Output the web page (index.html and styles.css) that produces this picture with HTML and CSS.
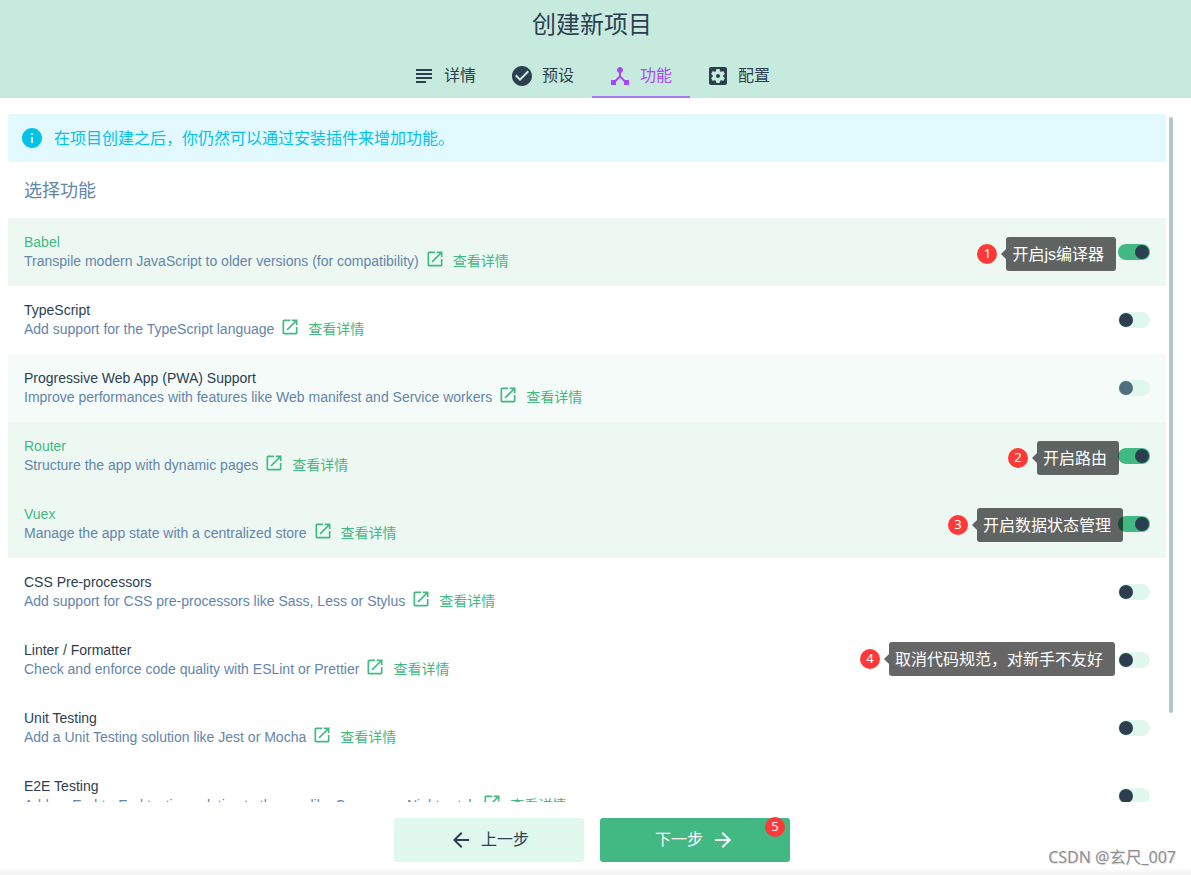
FILE: index.html
```html
<!DOCTYPE html>
<html lang="zh-CN">
<head>
<meta charset="utf-8">
<meta name="viewport" content="width=device-width, initial-scale=1">
<title>创建新项目</title>
<link rel="stylesheet" href="styles.css">
</head>
<body>
<svg class="defs" aria-hidden="true">
  <symbol id="open" viewBox="0 0 24 24"><path d="M19 19H5V5h7V3H5c-1.11 0-2 .9-2 2v14c0 1.1.89 2 2 2h14c1.1 0 2-.9 2-2v-7h-2v7zM14 3v2h3.59l-9.83 9.83 1.41 1.41L19 6.41V10h2V3h-7z"/></symbol>
</svg>
<header class="header">
  <h1 class="title">创建新项目</h1>
  <nav class="tabs">
    <button class="tab" type="button"><svg class="icon" viewBox="0 0 24 24"><path d="M14 17H4v2h10v-2zm6-8H4v2h16V9zM4 15h16v-2H4v2zM4 5v2h16V5H4z"/></svg>详情</button>
    <button class="tab" type="button"><svg class="icon" viewBox="0 0 24 24"><path d="M12 2C6.48 2 2 6.48 2 12s4.48 10 10 10 10-4.48 10-10S17.52 2 12 2zm-2 15l-5-5 1.41-1.41L10 14.17l7.59-7.59L19 8l-9 9z"/></svg>预设</button>
    <button class="tab tab-active" type="button"><svg class="icon" viewBox="0 0 24 24"><path d="M17 16l-4-4V8.82C14.16 8.4 15 7.3 15 6c0-1.66-1.34-3-3-3S9 4.34 9 6c0 1.3.84 2.4 2 2.82V12l-4 4H3v5h5v-3.05l4-4.2 4 4.2V21h5v-5h-4z"/></svg>功能</button>
    <button class="tab" type="button"><svg class="icon" viewBox="0 0 24 24"><path d="M12 10c-1.1 0-2 .9-2 2s.9 2 2 2 2-.9 2-2-.9-2-2-2zm7-7H5c-1.11 0-2 .9-2 2v14c0 1.1.89 2 2 2h14c1.11 0 2-.9 2-2V5c0-1.1-.89-2-2-2zm-1.75 9c0 .23-.02.46-.05.68l1.48 1.16c.13.11.17.3.08.45l-1.4 2.42c-.09.15-.27.21-.43.15l-1.74-.7c-.36.28-.76.51-1.18.69l-.26 1.85c-.03.17-.18.3-.35.3h-2.8c-.17 0-.32-.13-.35-.29l-.26-1.85c-.43-.18-.82-.41-1.18-.69l-1.74.7c-.16.06-.34 0-.43-.15l-1.4-2.42c-.09-.15-.05-.34.08-.45l1.48-1.16c-.03-.23-.05-.46-.05-.69 0-.23.02-.46.05-.68l-1.48-1.16c-.13-.11-.17-.3-.08-.45l1.4-2.42c.09-.15.27-.21.43-.15l1.74.7c.36-.28.76-.51 1.18-.69l.26-1.85c.03-.17.18-.3.35-.3h2.8c.17 0 .32.13.35.29l.26 1.85c.43.18.82.41 1.18.69l1.74-.7c.16-.06.34 0 .43.15l1.4 2.42c.09.15.05.34-.08.45l-1.48 1.16c.03.23.05.46.05.69z"/></svg>配置</button>
  </nav>
</header>

<main class="main">
  <div class="pane">
    <p class="notice"><svg class="icon" viewBox="0 0 24 24"><path d="M12 2C6.48 2 2 6.48 2 12s4.48 10 10 10 10-4.48 10-10S17.52 2 12 2zm1 15h-2v-6h2v6zm0-8h-2V7h2v2z"/></svg><span class="notice-text">在项目创建之后，你仍然可以通过安装插件来增加功能。</span></p>
    <h2 class="subtitle">选择功能</h2>
    <ul class="list">
      <li class="row row-on">
        <div class="info">
          <label class="name" for="babel">Babel</label>
          <div class="desc">Transpile modern JavaScript to older versions (for compatibility)<a class="link" href="#"><svg class="icon-small"><use href="#open"/></svg>查看详情</a></div>
        </div>
        <input class="switch" type="checkbox" id="babel" checked>
        <div class="callout callout-babel"><span class="badge">1</span><span class="tip">开启js编译器</span></div>
      </li>
      <li class="row">
        <div class="info">
          <label class="name" for="ts">TypeScript</label>
          <div class="desc">Add support for the TypeScript language<a class="link" href="#"><svg class="icon-small"><use href="#open"/></svg>查看详情</a></div>
        </div>
        <input class="switch" type="checkbox" id="ts">
      </li>
      <li class="row row-hover">
        <div class="info">
          <label class="name" for="pwa">Progressive Web App (PWA) Support</label>
          <div class="desc">Improve performances with features like Web manifest and Service workers<a class="link" href="#"><svg class="icon-small"><use href="#open"/></svg>查看详情</a></div>
        </div>
        <input class="switch" type="checkbox" id="pwa">
      </li>
      <li class="row row-on">
        <div class="info">
          <label class="name" for="router">Router</label>
          <div class="desc">Structure the app with dynamic pages<a class="link" href="#"><svg class="icon-small"><use href="#open"/></svg>查看详情</a></div>
        </div>
        <input class="switch" type="checkbox" id="router" checked>
        <div class="callout callout-router"><span class="badge">2</span><span class="tip">开启路由</span></div>
      </li>
      <li class="row row-on">
        <div class="info">
          <label class="name" for="vuex">Vuex</label>
          <div class="desc">Manage the app state with a centralized store<a class="link" href="#"><svg class="icon-small"><use href="#open"/></svg>查看详情</a></div>
        </div>
        <input class="switch" type="checkbox" id="vuex" checked>
        <div class="callout callout-vuex"><span class="badge">3</span><span class="tip">开启数据状态管理</span></div>
      </li>
      <li class="row">
        <div class="info">
          <label class="name" for="css">CSS Pre-processors</label>
          <div class="desc">Add support for CSS pre-processors like Sass, Less or Stylus<a class="link" href="#"><svg class="icon-small"><use href="#open"/></svg>查看详情</a></div>
        </div>
        <input class="switch" type="checkbox" id="css">
      </li>
      <li class="row">
        <div class="info">
          <label class="name" for="linter">Linter / Formatter</label>
          <div class="desc">Check and enforce code quality with ESLint or Prettier<a class="link" href="#"><svg class="icon-small"><use href="#open"/></svg>查看详情</a></div>
        </div>
        <input class="switch" type="checkbox" id="linter">
        <div class="callout callout-linter"><span class="badge">4</span><span class="tip">取消代码规范，对新手不友好</span></div>
      </li>
      <li class="row">
        <div class="info">
          <label class="name" for="unit">Unit Testing</label>
          <div class="desc">Add a Unit Testing solution like Jest or Mocha<a class="link" href="#"><svg class="icon-small"><use href="#open"/></svg>查看详情</a></div>
        </div>
        <input class="switch" type="checkbox" id="unit">
      </li>
      <li class="row">
        <div class="info">
          <label class="name" for="e2e">E2E Testing</label>
          <div class="desc">Add an End-to-End testing solution to the app like Cypress or Nightwatch<a class="link" href="#"><svg class="icon-small"><use href="#open"/></svg>查看详情</a></div>
        </div>
        <input class="switch" type="checkbox" id="e2e">
      </li>
    </ul>
  </div>
  <div class="rail"><div class="thumb"></div></div>
</main>

<footer class="footer">
  <button class="button" type="button"><svg class="icon" viewBox="0 0 24 24"><path d="M20 11H7.83l5.59-5.59L12 4l-8 8 8 8 1.41-1.41L7.83 13H20v-2z"/></svg>上一步</button>
  <button class="button button-primary" type="button">下一步<svg class="icon" viewBox="0 0 24 24"><path d="M12 4l-1.41 1.41L16.17 11H4v2h12.17l-5.58 5.59L12 20l8-8z"/></svg><span class="badge badge-corner">5</span></button>
  <span class="watermark">CSDN @玄尺_007</span>
</footer>
</body>
</html>
```
FILE: styles.css
```css
* { box-sizing: border-box; }

body {
  margin: 0;
  height: 100vh;
  display: flex;
  flex-direction: column;
  overflow: hidden;
  background: #fff;
  color: #2c3e50;
  font: 16px/24px "Liberation Sans", "Noto Sans CJK SC", sans-serif;
}

h1, h2, p, ul { margin: 0; padding: 0; font-weight: 400; }
button { border: 0; padding: 0; font: inherit; color: inherit; cursor: pointer; }

.defs { display: none; }
.icon { width: 24px; height: 24px; flex: none; fill: currentColor; }
.icon-small { width: 20px; height: 20px; flex: none; fill: currentColor; }

.header {
  display: flex;
  flex-direction: column;
  align-items: center;
  gap: 4px;
  padding-right: 7px;
  background: #c6ebde;
}
.title { font-size: 24px; line-height: 50px; }
.tabs { display: flex; }
.tab {
  display: flex;
  align-items: center;
  gap: 8px;
  height: 44px;
  padding: 0 18px 0 16px;
  background: none;
}
.tab-active { color: #a649f5; box-shadow: inset 0 -2px #ab76ee; }

.main {
  flex: 1;
  min-height: 0;
  display: flex;
  gap: 3px;
  padding: 0 18px 0 8px;
}
.pane { flex: 1; min-width: 0; padding-top: 16px; overflow: hidden; }
.rail { width: 4px; padding-top: 19px; }
.thumb { height: 87%; border-radius: 2px; background: #b3c6ce; }

.notice {
  display: flex;
  align-items: center;
  gap: 10px;
  height: 48px;
  padding: 0 12px;
  border-radius: 3px;
  background: #e2f9ff;
  color: #03c2e6;
}
.notice-text { padding-top: 2px; }
.subtitle { padding: 15px 16px 13px; font-size: 18px; line-height: 28px; color: #6485aa; }

.list { list-style: none; }
.row {
  position: relative;
  display: flex;
  align-items: center;
  height: 68px;
  padding: 0 16px;
}
.row-on { background: #eef8f3; }
.row-hover { background: #f4fbf8; }
.info { flex: 1; min-width: 0; font-size: 14px; }
.name { display: block; line-height: 18px; }
.row-on .name { color: #42b983; }
.desc { display: flex; align-items: center; height: 20px; color: #6485aa; white-space: nowrap; }
.link {
  display: flex;
  align-items: center;
  gap: 8px;
  height: 20px;
  margin-left: 6px;
  color: #42b983;
  text-decoration: none;
}
.link .icon-small { margin-bottom: 4px; }

.switch {
  appearance: none;
  width: 32px;
  height: 16px;
  margin: 0;
  padding: 1px;
  border-radius: 8px;
  background: #e0f8ed;
  cursor: pointer;
}
.switch::before {
  content: "";
  display: block;
  width: 14px;
  height: 14px;
  border-radius: 50%;
  background: #2c3e50;
}
.switch:checked { background: #42b983; }
.switch:checked::before { margin-left: auto; }
.row-hover .switch::before { background: #4f6f7f; }

.callout { position: absolute; display: flex; align-items: center; gap: 9px; }
.callout-babel { right: 50px; top: 19px; }
.callout-router { right: 47px; top: 19px; }
.callout-vuex { right: 43px; top: 18px; }
.callout-linter { right: 51px; top: 16px; }
.tip {
  position: relative;
  height: 34px;
  padding: 0 12px 0 6px;
  border-radius: 3px;
  background: rgba(0, 0, 0, .6);
  color: #fff;
  line-height: 36px;
  white-space: nowrap;
}
.tip::before {
  content: "";
  position: absolute;
  right: 100%;
  top: 12px;
  border: 5px solid transparent;
  border-left: 0;
  border-right-color: rgba(0, 0, 0, .6);
}
.badge {
  width: 20px;
  height: 20px;
  border-radius: 50%;
  background: #ff3838;
  color: #fff;
  font: 13px/19px "Noto Sans", sans-serif;
  text-align: center;
}

.footer {
  position: relative;
  display: flex;
  justify-content: center;
  gap: 16px;
  padding: 16px 7px 13px 0;
  background: linear-gradient(to top, #f2f2f2, #fff 8px);
}
.button {
  position: relative;
  display: flex;
  align-items: center;
  justify-content: center;
  gap: 8px;
  width: 190px;
  height: 44px;
  border-radius: 3px;
  background: #e0f8ed;
}
.button-primary { background: #42b983; color: #fff; }
.badge-corner { position: absolute; right: 5px; top: -1px; }
.watermark {
  position: absolute;
  right: 15px;
  bottom: 6px;
  color: #8f8f8f;
  font-family: "Noto Sans", "Noto Sans CJK SC", sans-serif;
  text-shadow: 1px 1px #e4e4e4;
}
```
